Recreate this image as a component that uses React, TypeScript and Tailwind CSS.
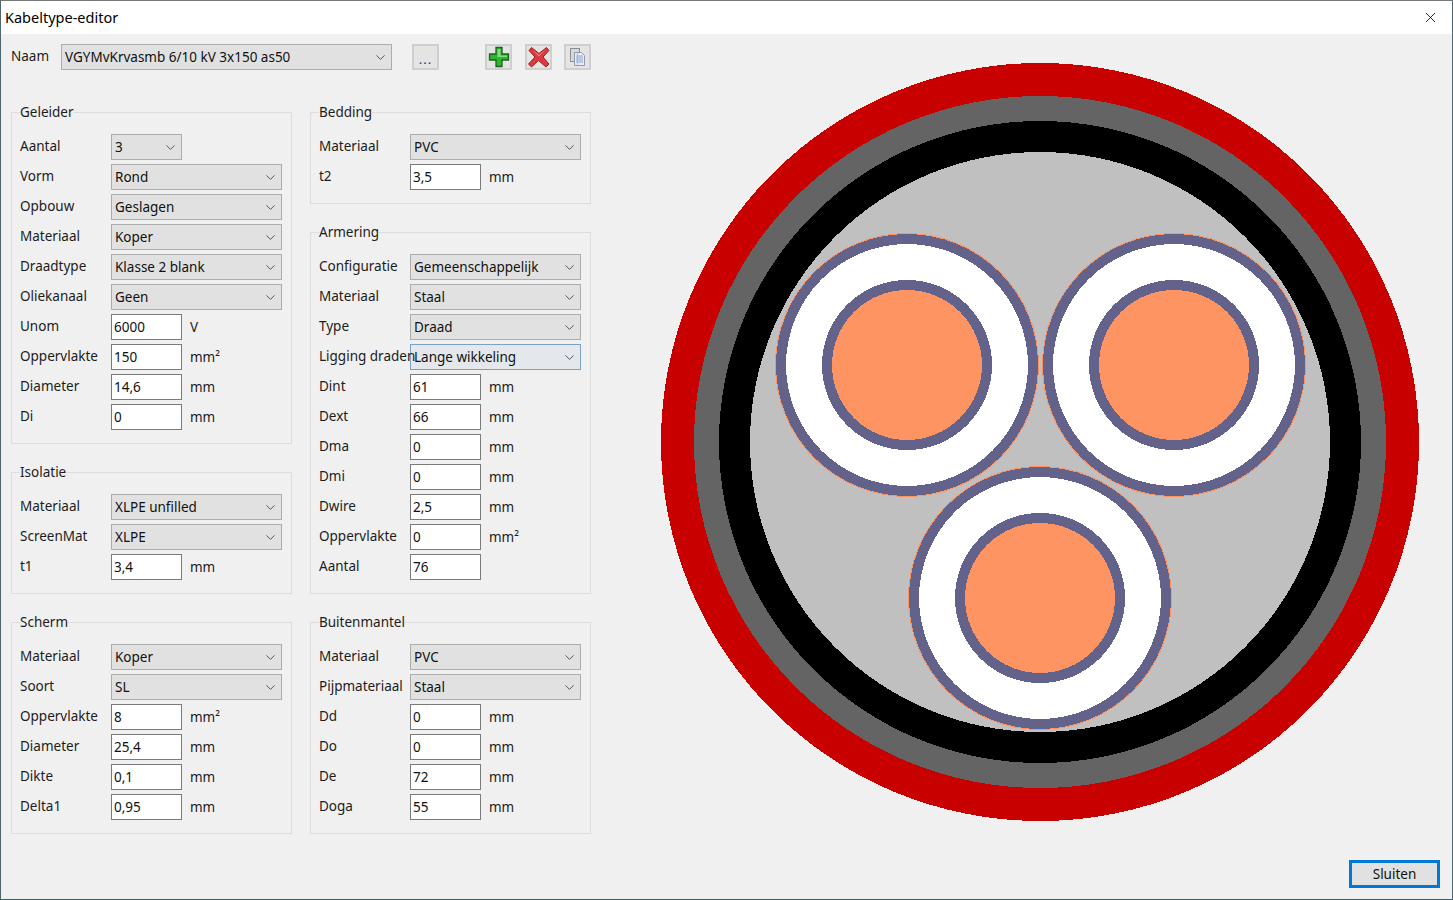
import React from 'react';
import { ChevronDown, X } from 'lucide-react';

type Field = {
  label: string;
  value: string;
  kind: 'select' | 'small-select' | 'input';
  unit?: string;
  focus?: boolean;
};

const sel = (label: string, value: string, focus?: boolean): Field => ({ label, value, kind: 'select', focus });
const inp = (label: string, value: string, unit?: string): Field => ({ label, value, kind: 'input', unit });

const leftGroups: { title: string; fields: Field[]; className: string }[] = [
  {
    title: 'Geleider',
    className: 'mb-[18px]',
    fields: [
      { label: 'Aantal', value: '3', kind: 'small-select' },
      sel('Vorm', 'Rond'),
      sel('Opbouw', 'Geslagen'),
      sel('Materiaal', 'Koper'),
      sel('Draadtype', 'Klasse 2 blank'),
      sel('Oliekanaal', 'Geen'),
      inp('Unom', '6000', 'V'),
      inp('Oppervlakte', '150', 'mm²'),
      inp('Diameter', '14,6', 'mm'),
      inp('Di', '0', 'mm'),
    ],
  },
  {
    title: 'Isolatie',
    className: 'mb-[18px]',
    fields: [sel('Materiaal', 'XLPE unfilled'), sel('ScreenMat', 'XLPE'), inp('t1', '3,4', 'mm')],
  },
  {
    title: 'Scherm',
    className: '',
    fields: [
      sel('Materiaal', 'Koper'),
      sel('Soort', 'SL'),
      inp('Oppervlakte', '8', 'mm²'),
      inp('Diameter', '25,4', 'mm'),
      inp('Dikte', '0,1', 'mm'),
      inp('Delta1', '0,95', 'mm'),
    ],
  },
];

const rightGroups: { title: string; fields: Field[]; className: string }[] = [
  {
    title: 'Bedding',
    className: 'mb-[18px]',
    fields: [sel('Materiaal', 'PVC'), inp('t2', '3,5', 'mm')],
  },
  {
    title: 'Armering',
    className: 'mb-[18px]',
    fields: [
      sel('Configuratie', 'Gemeenschappelijk'),
      sel('Materiaal', 'Staal'),
      sel('Type', 'Draad'),
      sel('Ligging draden', 'Lange wikkeling', true),
      inp('Dint', '61', 'mm'),
      inp('Dext', '66', 'mm'),
      inp('Dma', '0', 'mm'),
      inp('Dmi', '0', 'mm'),
      inp('Dwire', '2,5', 'mm'),
      inp('Oppervlakte', '0', 'mm²'),
      inp('Aantal', '76'),
    ],
  },
  {
    title: 'Buitenmantel',
    className: '',
    fields: [
      sel('Materiaal', 'PVC'),
      sel('Pijpmateriaal', 'Staal'),
      inp('Dd', '0', 'mm'),
      inp('Do', '0', 'mm'),
      inp('De', '72', 'mm'),
      inp('Doga', '55', 'mm'),
    ],
  },
];

const cores = [
  { cx: 907, cy: 365 },
  { cx: 1174, cy: 365 },
  { cx: 1040, cy: 598 },
];

const Combo = ({ value, width, focus }: { value: string; width: string; focus?: boolean }) => (
  <div
    className={`flex h-[26px] items-center justify-between border pl-[3px] pr-[3px] text-[#111] ${width} ${
      focus ? 'border-[#7ba2c2] bg-[#e4e8ec]' : 'border-[#adadad] bg-[#e1e1e1]'
    }`}
  >
    <span className="whitespace-nowrap">{value}</span>
    <ChevronDown size={15} strokeWidth={1.4} className="text-[#444]" />
  </div>
);

const Row = ({ field }: { field: Field }) => (
  <div className="flex h-[26px] items-center">
    <span className="w-[91px] shrink-0 -translate-y-[1px] whitespace-nowrap text-[#1c1c1c]">{field.label}</span>
    {field.kind === 'select' && <Combo value={field.value} width="w-[171px]" focus={field.focus} />}
    {field.kind === 'small-select' && <Combo value={field.value} width="w-[71px]" />}
    {field.kind === 'input' && (
      <div className="flex h-[26px] w-[71px] items-center border border-[#7a7a7a] bg-white pl-[2px] text-[#111]">
        {field.value}
      </div>
    )}
    {field.unit && <span className="ml-[8px] text-[#1c1c1c]">{field.unit}</span>}
  </div>
);

const Group = ({ title, fields, className }: { title: string; fields: Field[]; className: string }) => (
  <fieldset className={`w-[281px] border border-[#dcdcdc] px-[8px] pb-[13px] pt-[2px] ${className}`}>
    <legend className="ml-[0px] h-[20px] px-[0px] leading-[20px] text-[#1c1c1c]">{title}</legend>
    <div className="flex flex-col gap-[4px] pt-[10px]">
      {fields.map(f => (
        <Row key={f.label} field={f} />
      ))}
    </div>
  </fieldset>
);

const IconButton = ({ children, className = '' }: { children: React.ReactNode; className?: string }) => (
  <div className={`flex h-[26px] w-[27px] items-center justify-center border-2 border-[#cfcfcf] bg-[#e4e4e4] ${className}`}>
    {children}
  </div>
);

export default function App() {
  return (
    <div className="flex h-[900px] w-[1453px] flex-col overflow-hidden border border-t-[#777] border-x-[#4d6670] border-b-[#33626e] bg-[#f0f0f0] font-['Noto_Sans',sans-serif] text-[13.5px]">
      {/* Title bar */}
      <div className="flex h-[33px] shrink-0 items-center justify-between bg-white pl-[4px] pr-[13px]">
        <span className="text-[14.5px] text-black">Kabeltype-editor</span>
        <X size={17} strokeWidth={1.2} className="text-black" />
      </div>

      <div className="flex min-h-0 flex-1">
        {/* Left side with the form */}
        <div className="w-[591px] shrink-0 pl-[10px]">
          <div className="flex h-[26px] items-center pl-[-1px] mt-[10px]">
            <span className="w-[50px] shrink-0 -translate-y-[1px] pl-0 text-[#1c1c1c]">Naam</span>
            <Combo value="VGYMvKrvasmb 6/10 kV 3x150 as50" width="w-[331px]" />
            <IconButton className="ml-[20px]">
              <span className="mt-[5px] text-[13px] leading-none tracking-[1px] text-[#1e3c78]">...</span>
            </IconButton>
            <IconButton className="ml-[46px]">
              <svg width="22" height="22" viewBox="0 0 22 22">
                <path
                  d="M8 1.5h6v6.5h6.5v6H14v6.5H8V14H1.5V8H8z"
                  fill="#2fb52f"
                  stroke="#17651d"
                  strokeWidth="1.3"
                />
                <path d="M9.5 3h3v6.5H19v1.5H9.5z" fill="#7fdc7f" />
              </svg>
            </IconButton>
            <IconButton className="ml-[13px]">
              <svg width="22" height="22" viewBox="0 0 22 22">
                <path
                  d="M3.5 1.5 11 7.5l7.5-6 2.5 3-6 6.500 6 7-3 3-7.500-6.500L3.500 21l-3-3 6.500-7L1 4.500z"
                  fill="#dd3a3f"
                  stroke="#9c2327"
                  strokeWidth="1"
                />
                <path d="M4 3.500 11 9l6.500-5.500-6.500 7z" fill="#f28a8c" />
              </svg>
            </IconButton>
            <IconButton className="ml-[12px]">
              <svg width="20" height="20" viewBox="0 0 20 20">
                <rect x="2.500" y="1.500" width="9" height="13" fill="#d8d8d8" stroke="#8d8d8d" />
                <path d="M6.500 5.500h7l3 3v10h-10z" fill="#e6edf8" stroke="#8f9aaa" />
                <path d="M8 9h7M8 11h7M8 13h7M8 15h7" stroke="#7e9cc8" strokeWidth="0.900" />
                <path d="M9.500 6v12" stroke="#e0a890" strokeWidth="0.800" />
              </svg>
            </IconButton>
          </div>

          <div className="mt-[32px] flex gap-[18px] pl-0">
            <div className="flex flex-col">
              {leftGroups.map(g => (
                <Group key={g.title} {...g} />
              ))}
            </div>
            <div className="flex flex-col">
              {rightGroups.map(g => (
                <Group key={g.title} {...g} />
              ))}
            </div>
          </div>
        </div>

        {/* Cable cross section */}
        <div className="flex min-w-0 flex-1 flex-col items-end pr-[12px]">
          <svg
            width="860"
            height="780"
            viewBox="592 52 860 780"
            shapeRendering="crispEdges"
            className="mr-[-12px] mt-[18px] shrink-0"
          >
            <circle cx="1040" cy="442" r="379" fill="#c80000" />
            <circle cx="1040" cy="442" r="346" fill="#646464" />
            <circle cx="1040" cy="442" r="321" fill="#000000" />
            <circle cx="1040" cy="442" r="290" fill="#c0c0c0" />
            {cores.map(c => (
              <g key={c.cx}>
                <circle cx={c.cx} cy={c.cy} r="132" fill="#ff9463" />
                <circle cx={c.cx} cy={c.cy} r="131" fill="#62628a" />
                <circle cx={c.cx} cy={c.cy} r="121" fill="#ffffff" />
                <circle cx={c.cx} cy={c.cy} r="85" fill="#62628a" />
                <circle cx={c.cx} cy={c.cy} r="75" fill="#ff9463" />
              </g>
            ))}
          </svg>
          <div className="mb-[11px] mt-auto flex h-[28px] w-[91px] items-center justify-center border-[3px] border-[#0078d7] bg-[#e1e1e1] text-[#111]">
            Sluiten
          </div>
        </div>
      </div>
    </div>
  );
}
